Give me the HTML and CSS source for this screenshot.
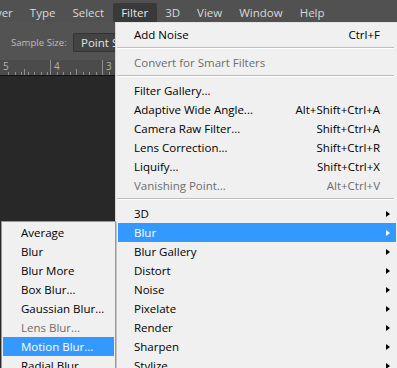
FILE: index.html
```html
<!DOCTYPE html>
<html>
<head>
<meta charset="utf-8">
<link rel="stylesheet" href="styles.css">
</head>
<body>
<div class="app">
  <div class="menubar">
    <span class="mb-item first">Layer</span>
    <span class="mb-item">Type</span>
    <span class="mb-item">Select</span>
    <span class="mb-item active">Filter</span>
    <span class="mb-item">3D</span>
    <span class="mb-item">View</span>
    <span class="mb-item">Window</span>
    <span class="mb-item">Help</span>
  </div>
  <div class="options">
    <span class="opt-label">Sample Size:</span>
    <div class="opt-select">Point Sample</div>
  </div>
  <div class="ruler">
    <svg width="397" height="15" viewBox="0 0 397 15">
      <g stroke="#8e8e8e" stroke-width="1" shape-rendering="crispEdges">
        <line x1="50.5" y1="0" x2="50.5" y2="15"/>
        <line x1="102.5" y1="0" x2="102.5" y2="15"/>
        <line x1="8.5" y1="12" x2="8.5" y2="15"/>
        <line x1="15.5" y1="12" x2="15.5" y2="15"/>
        <line x1="21.5" y1="12" x2="21.5" y2="15"/>
        <line x1="24.5" y1="9" x2="24.5" y2="15"/>
        <line x1="28.5" y1="12" x2="28.5" y2="15"/>
        <line x1="34.5" y1="12" x2="34.5" y2="15"/>
        <line x1="41.5" y1="12" x2="41.5" y2="15"/>
        <line x1="47.5" y1="12" x2="47.5" y2="15"/>
        <line x1="57.5" y1="12" x2="57.5" y2="15"/>
        <line x1="63.5" y1="12" x2="63.5" y2="15"/>
        <line x1="70.5" y1="12" x2="70.5" y2="15"/>
        <line x1="76.5" y1="9" x2="76.5" y2="15"/>
        <line x1="83.5" y1="12" x2="83.5" y2="15"/>
        <line x1="89.5" y1="12" x2="89.5" y2="15"/>
        <line x1="96.5" y1="12" x2="96.5" y2="15"/>
        <line x1="109.5" y1="12" x2="109.5" y2="15"/>
      </g>
      <g fill="#b4b4b4" font-family="Open Sans, sans-serif" font-size="10">
        <text x="3" y="10">5</text>
        <text x="54" y="10">4</text>
        <text x="106" y="10">3</text>
      </g>
    </svg>
  </div>
  <div class="canvas"></div>

  <div class="menu filter-menu">
    <div class="row"><span class="label">Add Noise</span><span class="key">Ctrl+F</span><span class="arr"></span></div>
    <div class="sep"></div>
    <div class="row disabled"><span class="label">Convert for Smart Filters</span><span class="key"></span><span class="arr"></span></div>
    <div class="sep"></div>
    <div class="row"><span class="label">Filter Gallery...</span><span class="key"></span><span class="arr"></span></div>
    <div class="row"><span class="label">Adaptive Wide Angle...</span><span class="key">Alt+Shift+Ctrl+A</span><span class="arr"></span></div>
    <div class="row"><span class="label">Camera Raw Filter...</span><span class="key">Shift+Ctrl+A</span><span class="arr"></span></div>
    <div class="row"><span class="label">Lens Correction...</span><span class="key">Shift+Ctrl+R</span><span class="arr"></span></div>
    <div class="row"><span class="label">Liquify...</span><span class="key">Shift+Ctrl+X</span><span class="arr"></span></div>
    <div class="row disabled"><span class="label">Vanishing Point...</span><span class="key">Alt+Ctrl+V</span><span class="arr"></span></div>
    <div class="sep"></div>
    <div class="row"><span class="label">3D</span><span class="key"></span><span class="arr"><i class="tri"></i></span></div>
    <div class="row hl"><span class="label">Blur</span><span class="key"></span><span class="arr"><i class="tri"></i></span></div>
    <div class="row"><span class="label">Blur Gallery</span><span class="key"></span><span class="arr"><i class="tri"></i></span></div>
    <div class="row"><span class="label">Distort</span><span class="key"></span><span class="arr"><i class="tri"></i></span></div>
    <div class="row"><span class="label">Noise</span><span class="key"></span><span class="arr"><i class="tri"></i></span></div>
    <div class="row"><span class="label">Pixelate</span><span class="key"></span><span class="arr"><i class="tri"></i></span></div>
    <div class="row"><span class="label">Render</span><span class="key"></span><span class="arr"><i class="tri"></i></span></div>
    <div class="row"><span class="label">Sharpen</span><span class="key"></span><span class="arr"><i class="tri"></i></span></div>
    <div class="row"><span class="label">Stylize</span><span class="key"></span><span class="arr"><i class="tri"></i></span></div>
  </div>

  <div class="menu submenu">
    <div class="srow">Average</div>
    <div class="srow">Blur</div>
    <div class="srow">Blur More</div>
    <div class="srow">Box Blur...</div>
    <div class="srow">Gaussian Blur...</div>
    <div class="srow disabled">Lens Blur...</div>
    <div class="srow hl">Motion Blur...</div>
    <div class="srow">Radial Blur</div>
  </div>
</div>
</body>
</html>
```

FILE: styles.css
```css
html, body {
  margin: 0;
  padding: 0;
}
body {
  width: 397px;
  height: 368px;
  overflow: hidden;
  background: #282828;
  font-family: "Open Sans", "Noto Sans", sans-serif;
}
.app {
  position: relative;
  width: 397px;
  height: 368px;
  display: flex;
  flex-direction: column;
  overflow: hidden;
}
.menubar {
  height: 22px;
  flex: none;
  background: #515151;
  display: flex;
  align-items: flex-end;
  white-space: nowrap;
  font-size: 11.5px;
  color: #d8d8d8;
}
.mb-item {
  height: 19px;
  line-height: 19px;
  padding: 0 8.5px;
  border-radius: 2px 2px 0 0;
}
.mb-item.first {
  margin-left: -25px;
}
.mb-item.active {
  background: #393939;
  color: #e6e6e6;
}
.options {
  height: 38px;
  flex: none;
  background: #535353;
  display: flex;
  align-items: center;
  padding-top: 3px;
  box-sizing: border-box;
}
.opt-label {
  margin-left: 11px;
  width: 62px;
  flex: none;
  font-size: 9.6px;
  color: #bdbdbd;
  white-space: nowrap;
}
.opt-select {
  height: 19px;
  width: 42px;
  flex: none;
  box-sizing: border-box;
  background: #434343;
  border: 1px solid #333;
  border-right: none;
  border-radius: 2px 0 0 2px;
  color: #e4e4e4;
  font-size: 11.5px;
  line-height: 17px;
  padding-left: 7px;
  white-space: nowrap;
  overflow: hidden;
}
.ruler {
  height: 15px;
  flex: none;
  background: #4b4b4b;
  border-bottom: 1px solid #111;
}
.ruler svg {
  display: block;
}
.canvas {
  flex: 1;
  background: #282828;
}
.menu {
  position: absolute;
  background: #f0f0f0;
  font-size: 11.5px;
  color: #000;
  white-space: nowrap;
}
.filter-menu {
  left: 115px;
  top: 22px;
  width: 285px;
  height: 360px;
  box-sizing: border-box;
  border-left: 1px solid #d6d6d6;
  border-top: 1px solid #e4e4e4;
  padding: 2px 4px 0 2px;
}
.row {
  height: 19px;
  line-height: 19px;
  display: flex;
  padding-left: 16px;
}
.row .label {
  flex: 1;
}
.row .key {
  text-align: right;
}
.row .arr {
  width: 16px;
  display: flex;
  align-items: center;
}
.tri {
  display: block;
  margin-left: 6px;
  width: 0;
  height: 0;
  border-left: 4px solid #000;
  border-top: 3.5px solid transparent;
  border-bottom: 3.5px solid transparent;
}
.disabled {
  color: #6d6d6d;
}
.hl {
  background: #3399ff;
  color: #fff;
}
.hl .tri {
  border-left-color: #fff;
}
.sep {
  height: 1px;
  margin: 3px 2px 4px -1px;
  background: #bdbdbd;
  border-bottom: 1px solid #fff;
}
.submenu {
  left: 1px;
  top: 221px;
  width: 115px;
  height: 160px;
  box-sizing: border-box;
  border: 1px solid #9a9a9a;
  box-shadow: 1px 1px 0 #c4c4c4;
  padding: 1px;
  z-index: 2;
}
.srow {
  height: 19px;
  line-height: 19px;
  padding-left: 18px;
}
```
